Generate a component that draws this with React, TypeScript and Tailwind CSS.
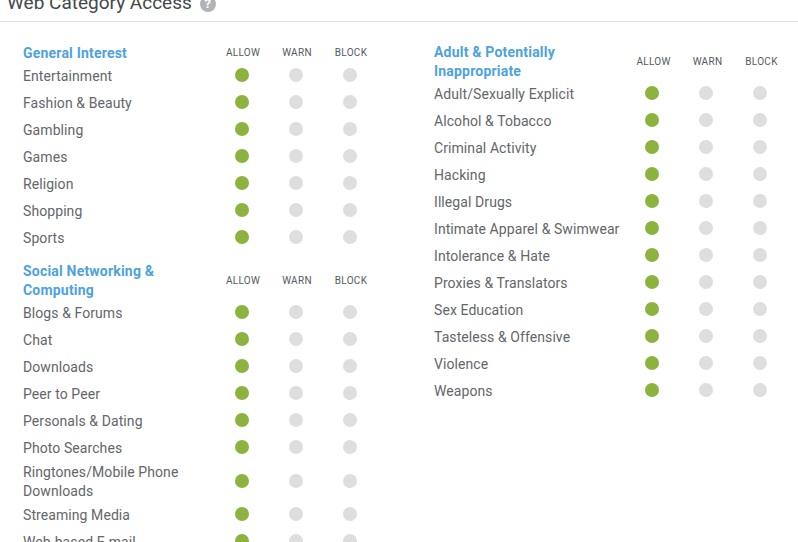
import React from 'react';

interface Section {
  title: React.ReactNode;
  twoLine?: boolean;
  items: React.ReactNode[];
}

const left: Section[] = [
  {
    title: 'General Interest',
    items: ['Entertainment', 'Fashion & Beauty', 'Gambling', 'Games', 'Religion', 'Shopping', 'Sports'],
  },
  {
    title: (
      <>
        Social Networking &<br />
        Computing
      </>
    ),
    twoLine: true,
    items: [
      'Blogs & Forums',
      'Chat',
      'Downloads',
      'Peer to Peer',
      'Personals & Dating',
      'Photo Searches',
      <>
        Ringtones/Mobile Phone
        <br />
        Downloads
      </>,
      'Streaming Media',
      'Web-based E-mail',
    ],
  },
];

const right: Section[] = [
  {
    title: (
      <>
        Adult & Potentially
        <br />
        Inappropriate
      </>
    ),
    twoLine: true,
    items: [
      'Adult/Sexually Explicit',
      'Alcohol & Tobacco',
      'Criminal Activity',
      'Hacking',
      'Illegal Drugs',
      'Intimate Apparel & Swimwear',
      'Intolerance & Hate',
      'Proxies & Translators',
      'Sex Education',
      'Tasteless & Offensive',
      'Violence',
      'Weapons',
    ],
  },
];

function CategoryTable({ section, narrow }: { section: Section; narrow?: boolean }) {
  return (
    <div className="mb-[11px]">
      <div className={`flex items-center -mb-px ${section.twoLine ? '' : 'pt-px'}`}>
        <div
          className={`${narrow ? 'w-[192.5px]' : 'w-[193px]'} text-[14px] font-bold leading-[19px] tracking-[0.2px] text-[#4ea2e0]`}
        >
          {section.title}
        </div>
        {['ALLOW', 'WARN', 'BLOCK'].map(h => (
          <div key={h} className="w-[54px] pb-[2px] text-center text-[10px] leading-[17px] tracking-[0.3px] text-[#555a5e]">
            {h}
          </div>
        ))}
      </div>
      {section.items.map((item, i) => (
        <div key={i} className="flex min-h-[27px] items-center">
          <div
            className={`${narrow ? 'w-[191px]' : 'w-[192px]'} pt-[2px] text-[14px] leading-[19px] tracking-[0.08px] text-[#63666a]`}
          >
            {item}
          </div>
          <div className="flex w-[54px] justify-center pb-px">
            <span className="h-[14px] w-[14px] rounded-full bg-[#8db33f]" />
          </div>
          <div className="flex w-[54px] justify-center pb-px">
            <span className="h-[14px] w-[14px] rounded-full bg-[#dedede]" />
          </div>
          <div className="flex w-[54px] justify-center pb-px">
            <span className="h-[14px] w-[14px] rounded-full bg-[#dedede]" />
          </div>
        </div>
      ))}
    </div>
  );
}

export default function App() {
  return (
    <div className="h-[542px] w-[798px] overflow-hidden bg-white font-['Roboto',sans-serif]">
      <div className="-mt-[9px] flex h-[31px] items-center gap-[8px] border-b border-[#dcdee0] pb-[7px] pl-[7px]">
        <span className="text-[19px] leading-[24px] text-[#45484b]">Web Category Access</span>
        <span className="mt-[3px] flex h-4 w-4 items-center justify-center rounded-full bg-[#b1b3b8] text-[13px] font-bold text-white">
          ?
        </span>
      </div>
      <div className="flex pl-[23px] pt-[21px]">
        <div className="w-[411px]">
          {left.map((s, i) => (
            <CategoryTable key={i} section={s} />
          ))}
        </div>
        <div>
          {right.map((s, i) => (
            <CategoryTable key={i} section={s} narrow />
          ))}
        </div>
      </div>
    </div>
  );
}
